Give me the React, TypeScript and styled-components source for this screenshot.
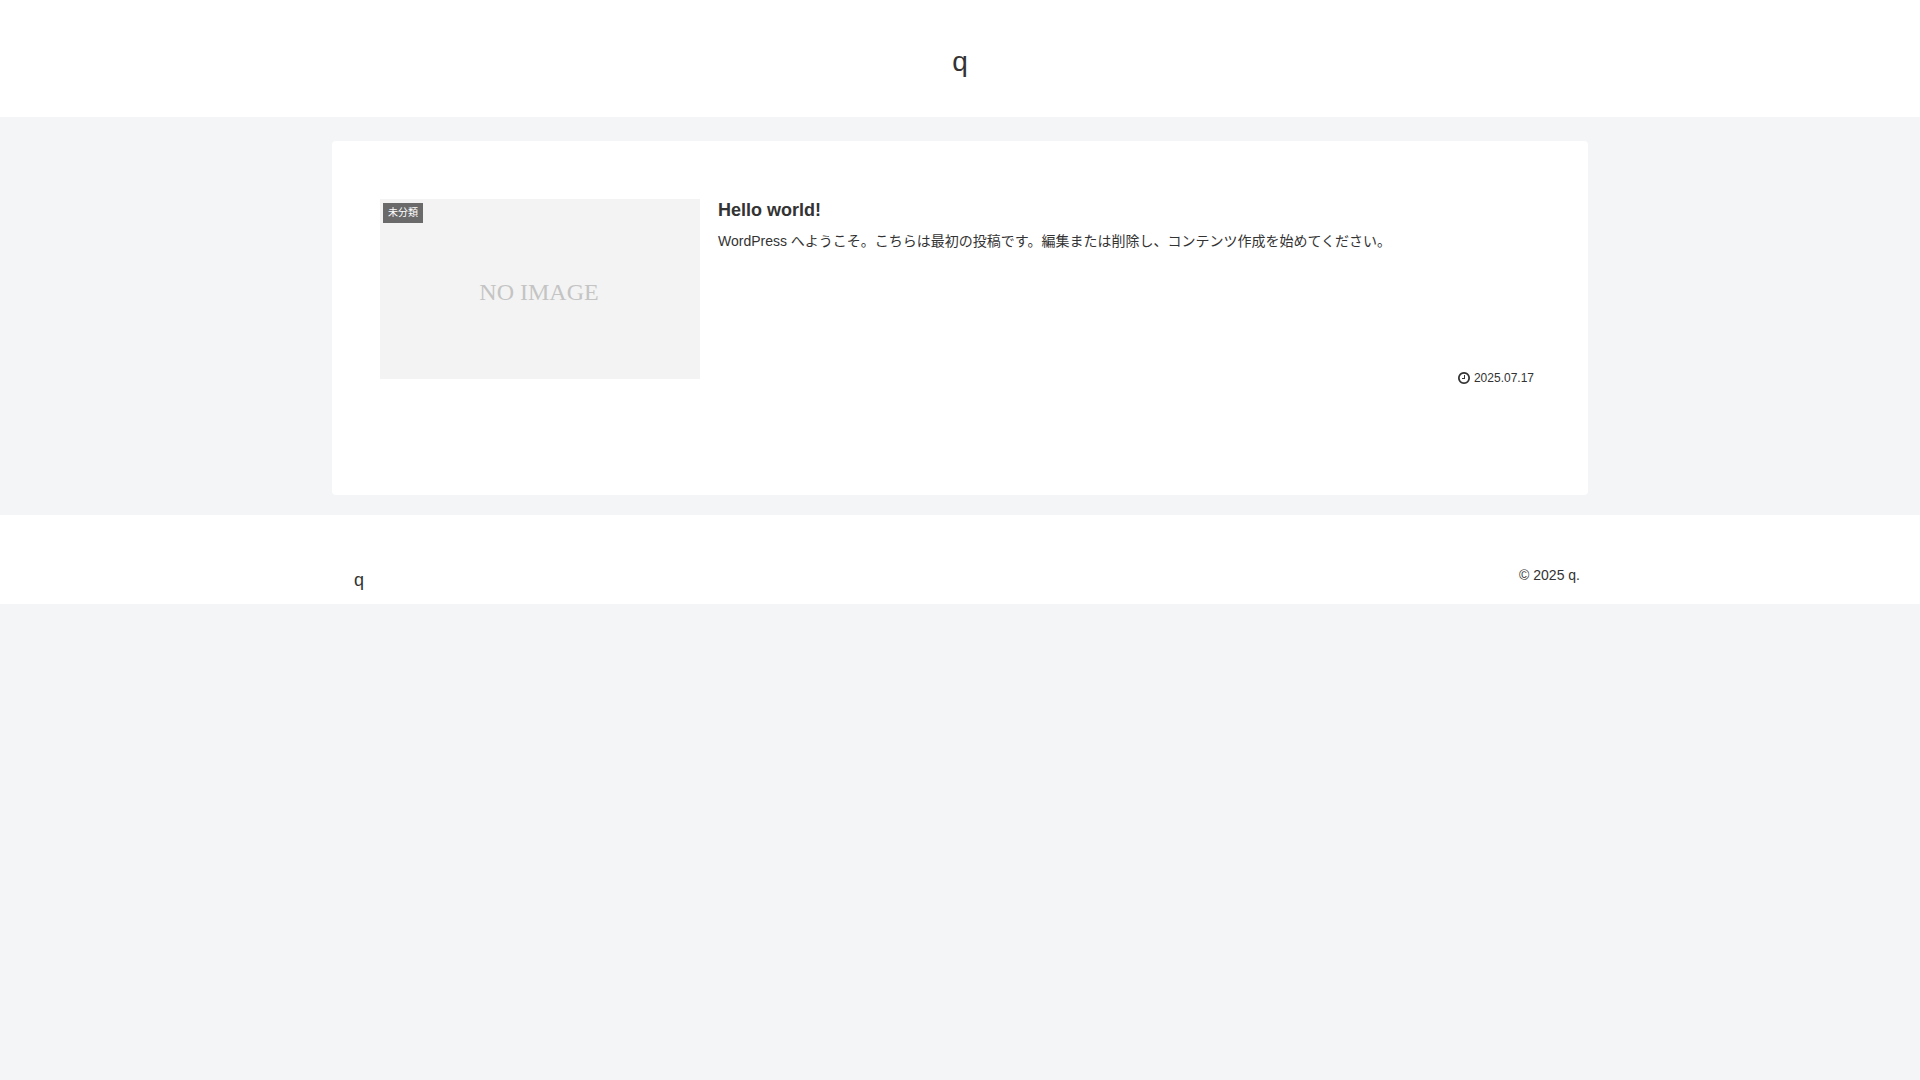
import React from "react";
import styled, { createGlobalStyle } from "styled-components";

const GlobalStyle = createGlobalStyle`
  *, *::before, *::after { box-sizing: border-box; }
  body {
    margin: 0;
    background: #f4f5f7;
    color: #333;
    font-family: "Liberation Sans", "Noto Sans CJK JP", sans-serif;
    font-size: 18px;
    line-height: 32px;
  }
  a { color: inherit; text-decoration: none; }
`;

const Header = styled.header`
  display: flex;
  justify-content: center;
  padding: 37px 24px 30px;
  background: #fff;
`;

const SiteName = styled.h1`
  margin: 0;
  font-size: 28px;
  font-weight: 400;
  line-height: 50px;
`;

const Wrap = styled.div`
  width: 100%;
  max-width: 1256px;
  margin: 0 auto;
`;

const Content = styled.div`
  padding: 24px 0 20px;
`;

const Main = styled.main`
  min-height: 354px;
  padding: 53px 48px;
  background: #fff;
  border-radius: 4px;
`;

const Card = styled.a`
  display: flex;
  gap: 18px;
  padding: 5px;
  margin: 0 -5px;
`;

const Thumb = styled.figure`
  position: relative;
  display: flex;
  align-items: center;
  justify-content: center;
  flex: none;
  width: 320px;
  aspect-ratio: 16 / 9;
  margin: 0;
  padding: 6px 2px 0 0;
  background: #f3f3f3;
  color: #c4c4c4;
  font-family: "Liberation Serif", serif;
  font-size: 24px;
`;

const Category = styled.span`
  position: absolute;
  top: 4px;
  left: 3px;
  height: 20px;
  padding: 0 5px;
  background: #6a6a6a;
  color: #fff;
  font-family: "Liberation Sans", "Noto Sans CJK JP", sans-serif;
  font-size: 10px;
  line-height: 20px;
`;

const Body = styled.div`
  display: flex;
  flex: 1;
  flex-direction: column;
`;

const Title = styled.h2`
  margin: 0 0 8px;
  font-size: 18px;
  line-height: 22px;
`;

const Snippet = styled.p`
  margin: 0;
  font-size: 14px;
  line-height: 24px;
`;

const Meta = styled.div`
  display: flex;
  align-items: center;
  justify-content: flex-end;
  gap: 4px;
  margin: auto 6px -8px 0;
  font-size: 12px;
  line-height: 18px;
`;

const Footer = styled.footer`
  padding: 44px 0 6px;
  background: #fff;
`;

const FooterRow = styled(Wrap)`
  display: flex;
  align-items: flex-start;
  justify-content: space-between;
  padding: 0 8px 0 22px;
`;

const FooterName = styled.a`
  padding-top: 3px;
  line-height: 36px;
`;

const Copyright = styled.div`
  font-size: 14px;
`;

const ClockIcon = () => (
  <svg width="12" height="12" viewBox="0 0 1536 1536" fill="currentColor" aria-hidden="true">
    <path d="M896 416v448q0 14-9 23t-23 9H544q-14 0-23-9t-9-23v-64q0-14 9-23t23-9h224V416q0-14 9-23t23-9h64q14 0 23 9t9 23zm416 352q0-148-73-273t-198-198-273-73-273 73-198 198-73 273 73 273 198 198 273 73 273-73 198-198 73-273zm224 0q0 209-103 385.500T1153.500 1433 768 1536t-385.500-103T103 1153.500 0 768t103-385.500T382.500 103 768 0t385.500 103T1433 382.500 1536 768z" />
  </svg>
);

export default function App() {
  return (
    <>
      <GlobalStyle />
      <Header>
        <SiteName><a href="#">q</a></SiteName>
      </Header>
      <Content>
        <Wrap>
          <Main>
            <Card href="#">
              <Thumb>
                NO IMAGE
                <Category>未分類</Category>
              </Thumb>
              <Body>
                <Title>Hello world!</Title>
                <Snippet>
                  WordPress へようこそ。こちらは最初の投稿です。編集または削除し、コンテンツ作成を始めてください。
                </Snippet>
                <Meta>
                  <ClockIcon />
                  <time dateTime="2025-07-17">2025.07.17</time>
                </Meta>
              </Body>
            </Card>
          </Main>
        </Wrap>
      </Content>
      <Footer>
        <FooterRow>
          <FooterName href="#">q</FooterName>
          <Copyright>© 2025 q.</Copyright>
        </FooterRow>
      </Footer>
    </>
  );
}
